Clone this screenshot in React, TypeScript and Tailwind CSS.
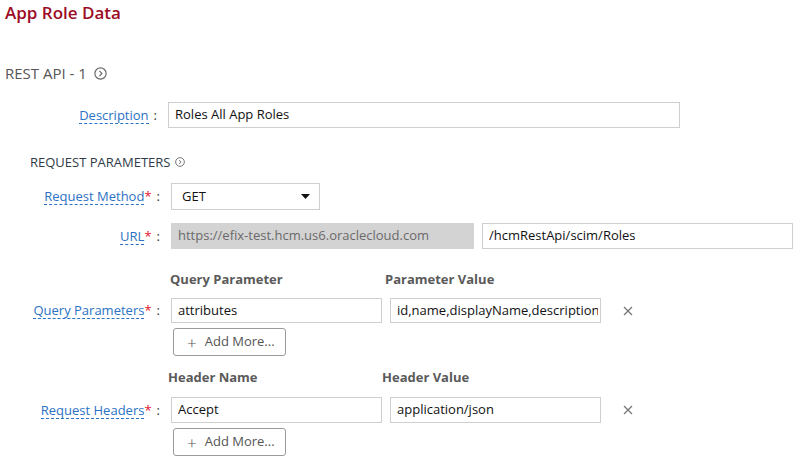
import React from 'react';

const font = { fontFamily: '"Open Sans", "Liberation Sans", sans-serif' };

function CircleChevron({ size }: { size: number }) {
  return (
    <svg width={size} height={size} viewBox="0 0 12 12" className="shrink-0">
      <circle cx="6" cy="6" r="5.2" fill="none" stroke="#6b6b6b" strokeWidth="1.1" />
      <polyline points="5,3.6 7.3,6 5,8.4" fill="none" stroke="#6b6b6b" strokeWidth="1.1" />
    </svg>
  );
}

function Close() {
  return (
    <svg width="10" height="10" viewBox="0 0 10 10" className="shrink-0">
      <path d="M1 1 L9 9 M9 1 L1 9" stroke="#777" strokeWidth="1.3" />
    </svg>
  );
}

function Label({ text, required = true, width = 'w-[160px]' }: { text: string; required?: boolean; width?: string }) {
  return (
    <div className={`${width} shrink-0 flex justify-end items-start text-[13px] leading-[18px]`}>
      <span className="text-[#2b72c4] border-b border-dashed border-[#2b72c4] leading-[16px]">{text}</span>
      {required && <span className="text-[#e0102a] leading-[16px]">*</span>}
      <span className="text-[#333] ml-[5px] leading-[16px]">:</span>
    </div>
  );
}

function TextBox({ value, w, h = 'h-[26px]' }: { value: string; w: string; h?: string }) {
  return (
    <div className={`${w} ${h} border border-[#cfcfcf] bg-white flex items-center pl-[6px] pr-[2px] overflow-hidden whitespace-nowrap text-[13px] text-[#111]`}>
      <span className="overflow-hidden">{value}</span>
    </div>
  );
}

function AddMore() {
  return (
    <div className="ml-[173px] mt-[5px] w-[113px] h-[28px] border border-[#9a9a9a] rounded-[3px] flex items-center pl-[13px] text-[13px] text-[#555]">
      <span className="text-[17px] leading-none mr-[8px] font-light">+</span>
      <span>Add More...</span>
    </div>
  );
}

export default function App() {
  return (
    <div className="w-[801px] h-[464px] bg-white overflow-hidden relative" style={font}>
      <div className="pl-[5px] pt-[1px]">
        <h1 className="text-[17px] leading-[24px] font-semibold text-[#9c0b25]">App Role Data</h1>
        <div className="mt-[38px] flex items-center gap-[7px] text-[15px] leading-[20px] text-[#555]">
          <span>REST API - 1</span>
          <CircleChevron size={13} />
        </div>
      </div>

      {/* Description */}
      <div className="mt-[19px] flex items-center">
        <Label text="Description" required={false} width="w-[157px]" />
        <div className="ml-[11px]">
          <TextBox value="Roles All App Roles" w="w-[512px]" />
        </div>
      </div>

      <div className="mt-[25px] pl-[30px] flex items-center gap-[5px] text-[13px] leading-[18px] text-[#2f3b48]">
        <span>REQUEST PARAMETERS</span>
        <CircleChevron size={10} />
      </div>

      {/* Request Method */}
      <div className="mt-[12px] flex items-center">
        <Label text="Request Method" />
        <div className="ml-[11px] w-[149px] h-[27px] border border-[#cfcfcf] flex items-center justify-between pl-[10px] pr-[9px] text-[13px] text-[#111]">
          <span>GET</span>
          <svg width="9" height="5" viewBox="0 0 9 5">
            <polygon points="0,0 9,0 4.5,5" fill="#111" />
          </svg>
        </div>
      </div>

      {/* URL */}
      <div className="mt-[13px] flex items-center">
        <Label text="URL" />
        <div className="ml-[11px] flex gap-[8px]">
          <div className="w-[303px] h-[26px] bg-[#d3d3d3] flex items-center pl-[7px] text-[13px] text-[#6a6a6a] whitespace-nowrap overflow-hidden">
            https://efix-test.hcm.us6.oraclecloud.com
          </div>
          <TextBox value="/hcmRestApi/scim/Roles" w="w-[311px]" />
        </div>
      </div>

      {/* Query parameters */}
      <div className="mt-[20px] flex text-[13px] leading-[20px] font-bold text-[#5a5a5a]">
        <span className="ml-[170px] w-[215px]">Query Parameter</span>
        <span>Parameter Value</span>
      </div>
      <div className="mt-[9px] flex items-center">
        <Label text="Query Parameters" />
        <div className="ml-[11px] flex items-center gap-[8px]">
          <TextBox value="attributes" w="w-[211px]" h="h-[25px]" />
          <TextBox value="id,name,displayName,description" w="w-[211px]" h="h-[25px]" />
          <div className="ml-[14px]"><Close /></div>
        </div>
      </div>
      <AddMore />

      {/* Request headers */}
      <div className="mt-[11px] flex text-[13px] leading-[20px] font-bold text-[#5a5a5a]">
        <span className="ml-[168px] w-[214px]">Header Name</span>
        <span>Header Value</span>
      </div>
      <div className="mt-[10px] flex items-center">
        <Label text="Request Headers" />
        <div className="ml-[11px] flex items-center gap-[8px]">
          <TextBox value="Accept" w="w-[211px]" />
          <TextBox value="application/json" w="w-[211px]" />
          <div className="ml-[14px]"><Close /></div>
        </div>
      </div>
      <AddMore />
    </div>
  );
}
